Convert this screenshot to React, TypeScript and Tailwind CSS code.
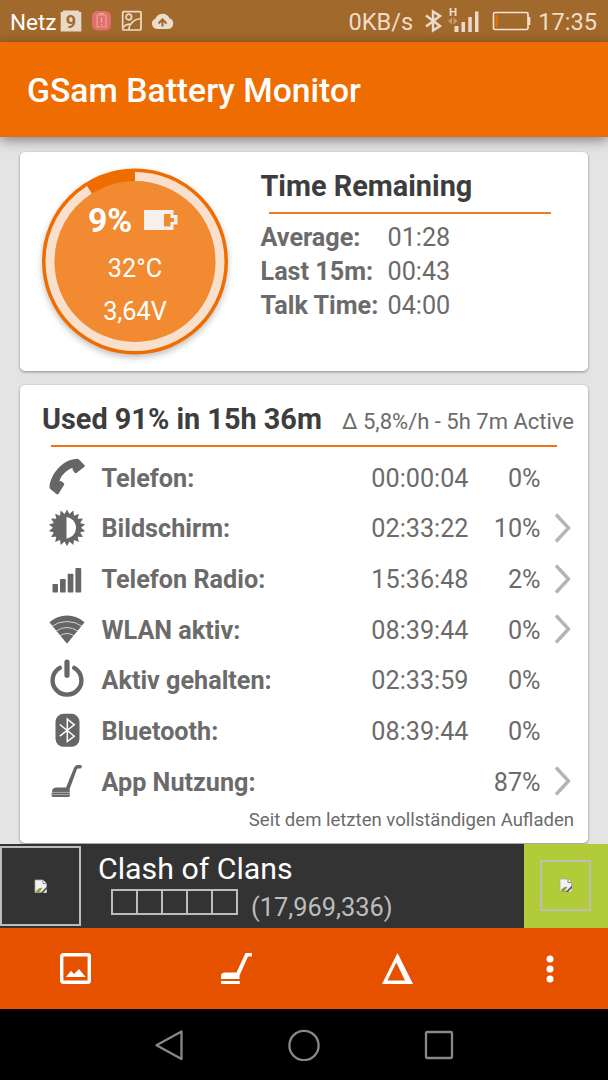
import type { ReactNode } from "react";

type UsageRow = {
    label: string;
    time?: string;
    percent: string;
    more?: boolean;
    icon: ReactNode;
};

const PhoneIcon = () => (
    <svg width="40" height="40" viewBox="0 1.200 40 40" fill="#666666">
        <path d="M2.500 29.800C2.800 24 6.500 15.500 13.200 9.400C18.500 4.600 24 2.300 29.800 1.900C30.800 1.900 31.400 2.100 32 2.700L37.300 8.200C38 8.900 37.900 9.500 37.200 10.200L29.400 16.100C28.700 16.600 28.200 16.400 27.700 15.900L25.800 13.300C25.200 12.500 25.600 11.900 26 11.200C22 11.200 13.300 18.500 12.400 24.700C13.100 24.100 13.700 24 14.400 24.500L16.800 26.500C17.400 27 17.400 27.600 17 28.200L11.600 36.900C11 37.800 10.200 37.900 9.400 37.300L3.600 32.500C2.800 31.800 2.500 31 2.500 29.800Z" />
    </svg>
);

const teeth = Array.from({ length: 36 }, (_, i) => {
    const r = i % 2 === 0 ? 18.4 : 14;
    const a = (i * Math.PI) / 18;
    return `${20 + r * Math.sin(a)},${20 - r * Math.cos(a)}`;
}).join(" ");

const BrightnessIcon = () => (
    <svg width="40" height="40" viewBox="0 1.200 40 40">
        <polygon points={teeth} fill="#666666" />
        <path d="M19.500 9.100A11 11 0 0 1 19.500 30.900Z" fill="#fff" />
    </svg>
);

const SignalIcon = () => (
    <svg width="40" height="40" viewBox="0 -0.500 40 40" fill="#666666">
        <rect x="5.500" y="23.500" width="5.500" height="8.500" rx="0.800" />
        <rect x="13" y="18.500" width="5.700" height="13.500" rx="0.800" />
        <rect x="20.700" y="13.200" width="5.700" height="18.800" rx="0.800" />
        <rect x="28.400" y="7.500" width="5.800" height="24.500" rx="0.800" />
    </svg>
);

const WifiIcon = () => (
    <svg width="40" height="40" viewBox="0 0 40 40">
        <path d="M2.400 12.300Q10 5.500 20 5.500T37.600 12.300L20.800 32.800Q20 33.800 19.200 32.800Z" fill="#666666" />
        <g fill="none" stroke="#d2d2d2" strokeWidth="1">
            <path d="M5 16.300Q11.500 11.500 20 11.500T35 16.300" />
            <path d="M9 21.300Q14 17.500 20 17.500T31 21.300" />
            <path d="M12.500 26Q16 23.500 20 23.500T27.500 26" />
        </g>
    </svg>
);

const PowerIcon = () => (
    <svg className="overflow-visible" width="40" height="40" viewBox="0 2.800 40 40" fill="none" stroke="#666666" strokeLinecap="round">
        <path d="M12.800 9.600A14.400 14.400 0 1 0 27.200 9.600" strokeWidth="4.400" />
        <path d="M20 4V17" strokeWidth="5.200" />
    </svg>
);

const BluetoothIcon = () => (
    <svg width="40" height="40" viewBox="0 2.200 40 40">
        <rect x="8.500" y="4" width="24" height="33" rx="8" fill="#666666" />
        <path d="M12.800 14.700L27.300 26.400L20.300 31.700V9.200L27.300 15L12.800 26.400" fill="none" stroke="#fff" strokeWidth="1.500" />
    </svg>
);

const VacuumIcon = () => (
    <svg width="40" height="40" viewBox="0 2 40 40" fill="#666666">
        <path d="M19 27.500L27 8Q28.200 5 31 5H33.500Q34.800 5 34.800 6.500T33.500 8.500H31Q30.200 8.500 29.700 9.800L22.500 29.500Z" />
        <path d="M5 32Q5 27.500 9.500 27.500H21Q23 27.500 22.800 32Z" />
        <rect x="4.600" y="32" width="18.200" height="5" rx="1.500" />
        <path d="M5 32.400H22.500M5 34.600H22.500" stroke="#bbb" strokeWidth="0.800" />
    </svg>
);

const BrokenImage = () => (
    <svg width="14" height="15" viewBox="0 0 14 15">
        <path d="M1 1H9L12.500 4.500V13.500H1Z" fill="#f2f2f2" stroke="#aaa" strokeWidth="0.800" />
        <path d="M9 1L9 4.500H12.500" fill="#fff" stroke="#777" strokeWidth="0.900" />
        <path d="M1.500 13.500Q3 8.500 8.500 8.700L5.500 13.500Z" fill="#8ca43a" />
        <path d="M6.500 14L12.800 7.500V10L9 14Z" fill="#555" />
        <path d="M9.500 13.700L12.500 10.500V13.700Z" fill="#ddd" />
    </svg>
);

const rows: UsageRow[] = [
    { label: "Telefon:", time: "00:00:04", percent: "0%", icon: <PhoneIcon /> },
    { label: "Bildschirm:", time: "02:33:22", percent: "10%", more: true, icon: <BrightnessIcon /> },
    { label: "Telefon Radio:", time: "15:36:48", percent: "2%", more: true, icon: <SignalIcon /> },
    { label: "WLAN aktiv:", time: "08:39:44", percent: "0%", more: true, icon: <WifiIcon /> },
    { label: "Aktiv gehalten:", time: "02:33:59", percent: "0%", icon: <PowerIcon /> },
    { label: "Bluetooth:", time: "08:39:44", percent: "0%", icon: <BluetoothIcon /> },
    { label: "App Nutzung:", percent: "87%", more: true, icon: <VacuumIcon /> },
];

const remaining = [
    { label: "Average:", value: "01:28" },
    { label: "Last 15m:", value: "00:43" },
    { label: "Talk Time:", value: "04:00" },
];

const StatusBar = () => (
    <div className="flex h-[42px] items-center justify-between bg-[#a1692c] pl-[10px] pr-[11px] text-[23.600px] text-[#f0dcc8]">
        <div className="flex items-center">
            <span className="w-[50px] pt-[3px] text-[22.500px] text-white">Netz</span>
            <svg width="22" height="24" viewBox="0 0 22 24">
                <path d="M3 1.500H19V3H21.300V22.500H0.700V3H3Z" fill="#e9d8c6" />
                <text x="11" y="18.500" textAnchor="middle" fontSize="18" fontWeight="700" fill="#a1692c">9</text>
            </svg>
            <svg className="ml-[9px]" width="21" height="22" viewBox="0 0 21 22" fill="none">
                <rect x="1" y="1" width="19" height="19.500" rx="5.500" fill="#e0706c" />
                <path d="M8.500 5V3.700H12.500V5M6 5H15V17H6Z" stroke="#eda48f" strokeWidth="1.200" />
                <path d="M10.500 7.500V12.500M10.500 14V15.200" stroke="#f0b49f" strokeWidth="1.300" />
            </svg>
            <svg className="ml-[9px]" width="22" height="22" viewBox="0 0 22 22" fill="none" stroke="#ecdccb" strokeWidth="1.700">
                <rect x="1.700" y="1.700" width="18.300" height="18.300" rx="1" />
                <circle cx="7.800" cy="7" r="2.800" />
                <path d="M2 17.500Q5.500 13.500 9 14.300M7.500 20Q9 9.500 20 8.500" />
            </svg>
            <svg className="ml-[8px]" width="23" height="18" viewBox="0 0 23 18">
                <path d="M6 17A5.300 5.300 0 0 1 4.300 6.800A7.600 7.600 0 0 1 18.500 6.300A5.500 5.500 0 0 1 17 17Z" fill="#ecdccb" />
                <path d="M11.500 14.500V8.500M7.500 11.500L11.500 7.500L15.500 11.500" fill="none" stroke="#a1692c" strokeWidth="2" />
            </svg>
        </div>
        <div className="flex items-center">
            <span className="pt-[3px]">0KB/s</span>
            <svg className="ml-[12px]" width="17" height="24" viewBox="0 0 17 24" fill="none" stroke="#ecdccb" strokeWidth="2.400">
                <path d="M1 6.500L15 17L8 21.500V2.500L15 7L1 17.500" />
            </svg>
            <svg className="mb-[2px] ml-[6px]" width="32" height="28" viewBox="0 0 32 28" fill="#ecdccb">
                <text x="1" y="10" fontSize="11.500" fontWeight="700">H</text>
                <path d="M0 15L4 11.500V18.500ZM9.500 15L5.500 11.500V18.500Z" fill="#c39c72" />
                <rect x="6.500" y="20" width="4" height="6" />
                <rect x="13.500" y="16" width="3.500" height="10" />
                <rect x="20.300" y="11" width="3.500" height="15" />
                <rect x="27" y="5.500" width="3.500" height="20.500" />
            </svg>
            <svg className="ml-[12px]" width="39" height="20" viewBox="0 0 39 20" fill="none" stroke="#f5e6d6" strokeWidth="1.600">
                <rect x="1.500" y="1.500" width="34.500" height="17" rx="1.500" />
                <path d="M37.300 6V14" strokeWidth="2" />
                <path d="M4.700 4V16" stroke="#ef6c00" strokeWidth="2.300" />
            </svg>
            <span className="ml-[7px] pt-[3px]">17:35</span>
        </div>
    </div>
);

const BatteryDial = () => (
    <div className="relative h-[200px] w-[200px]">
        <svg className="absolute inset-0 drop-shadow-[0_3px_3px_rgba(0,0,0,0.25)]" width="200" height="200" viewBox="0 0.500 200 200">
            <circle cx="100" cy="100" r="93" fill="#ef6c00" />
            <circle cx="100" cy="100" r="80.500" fill="#f28a32" />
            <circle
                cx="100"
                cy="100"
                r="85"
                fill="none"
                stroke="#f8e0cc"
                strokeWidth="9"
                pathLength="100"
                strokeDasharray="91 9"
                transform="rotate(-90 100 100)"
            />
        </svg>
        <div className="relative flex flex-col items-center pt-[36px] text-white">
            <div className="mr-[4px] flex h-[44px] items-center gap-[11px]">
                <span className="pt-[2px] text-[33.800px] font-bold tracking-[-0.300px]">9%</span>
                <svg width="35" height="22" viewBox="0 0 35 22">
                    <path d="M2 1H30.500V6H34.500V15.500H30.500V21H2Q1 21 1 20V2Q1 1 2 1Z" fill="#f6f0ec" />
                    <path d="M21 5H27.500V9H31V13H27.500V17.500H21Z" fill="#f28a32" />
                </svg>
            </div>
            <span className="mt-[5px] text-[25.300px] leading-[43px]">32°C</span>
            <span className="text-[25.300px] leading-[43px]">3,64V</span>
        </div>
    </div>
);

const App = () => {
    return (
        <div className="flex h-[1080px] w-[608px] flex-col overflow-hidden bg-[#e4e4e4] font-['Roboto',sans-serif] text-[#6b6b6b]">
            <StatusBar />
            <header className="z-10 flex h-[95px] items-center bg-[#ef6c00] pl-[27px] pt-[4px] shadow-[0_3px_12px_rgba(0,0,0,0.45)]">
                <h1 className="text-[33.700px] font-medium text-white">GSam Battery Monitor</h1>
            </header>

            <main className="flex h-[707px] flex-col gap-[14px] px-5 pt-[15px]">
                <section className="flex h-[219px] shrink-0 rounded-[5px] bg-white pl-[15px] pt-[10px] shadow-[0_1px_3px_rgba(0,0,0,0.4)]">
                    <BatteryDial />
                    <div className="ml-[25.500px] pt-[4px]">
                        <h2 className="text-[28.850px] font-bold leading-[40px] text-[#3d3d3d]">Time Remaining</h2>
                        <div className="mb-[6.600px] ml-[8px] mt-[6px] h-[2px] w-[282px] bg-[#ee7b1f]" />
                        {remaining.map((r) => (
                            <div key={r.label} className="flex h-[34.300px] items-center text-[25.200px]">
                                <span className="w-[127px] whitespace-nowrap font-bold">{r.label}</span>
                                <span>{r.value}</span>
                            </div>
                        ))}
                    </div>
                </section>

                <section className="h-[458px] shrink-0 rounded-[5px] bg-white pl-[22px] pr-[14px] pt-[14px] shadow-[0_1px_3px_rgba(0,0,0,0.4)]">
                    <div className="flex items-center justify-between whitespace-nowrap">
                        <h2 className="text-[28.850px] font-bold leading-[40px] text-[#3d3d3d]">Used 91% in 15h 36m</h2>
                        <span className="pt-[4px] text-[22px]">Δ 5,8%/h - 5h 7m Active</span>
                    </div>
                    <div className="ml-[9px] mt-[6px] h-[2px] w-[506px] bg-[#f3701a]" />
                    <div className="pt-[6px]">
                        {rows.map((row) => (
                            <div key={row.label} className="flex h-[50.670px] items-center text-[25.200px]">
                                <div className="ml-[5px] w-[54.500px]">{row.icon}</div>
                                <span className="w-[257px] pt-[0.500px] font-bold">{row.label}</span>
                                <span className="w-[110px] pt-[0.500px] text-right">{row.time}</span>
                                <span className="w-[72px] pt-[0.500px] text-right">{row.percent}</span>
                                {row.more && (
                                    <svg className="ml-[13px]" width="18" height="32" viewBox="0 0.500 18 32" fill="none" stroke="#b5b5b5" strokeWidth="3.400">
                                        <path d="M2 2L14.500 15.500L2 29" />
                                    </svg>
                                )}
                            </div>
                        ))}
                    </div>
                    <p className="text-right text-[18.550px] leading-[25px]">Seit dem letzten vollständigen Aufladen</p>
                </section>
            </main>

            <div className="z-10 flex h-[84px] bg-[#333333]">
                <div className="mt-[2px] flex h-[80px] w-[81px] items-center justify-center border-2 border-[#bdbdbd]">
                    <BrokenImage />
                </div>
                <div className="flex-1 pl-[17px] pt-[7px]">
                    <div className="text-[30.300px] leading-[36px] text-white">Clash of Clans</div>
                    <div className="flex items-start pl-[13px]">
                        <div className="mt-[2px] flex h-[26px] w-[127px] border border-[#bdbdbd]">
                            {[0, 1, 2, 3, 4].map((n) => (
                                <div key={n} className="flex-1 border border-[#bdbdbd]" />
                            ))}
                        </div>
                        <span className="ml-[13px] mt-[2px] text-[25.400px] leading-[36px] text-[#bdbdbd]">(17,969,336)</span>
                    </div>
                </div>
                <div className="flex w-[84px] items-center justify-center bg-[#b2cb39] pb-px pr-px">
                    <div className="flex h-[51px] w-[51px] items-center justify-center border-2 border-[#bdbdbd]">
                        <BrokenImage />
                    </div>
                </div>
            </div>

            <div className="flex h-[81px] items-center bg-[#e65100] pl-[59px]">
                <svg width="33" height="33" viewBox="0 0 33 33">
                    <rect x="2.700" y="2.700" width="27.600" height="27.600" rx="1.500" fill="none" stroke="#fff" strokeWidth="3.400" />
                    <path d="M7 25L12 18.800L15 22L20 17L26.500 25Z" fill="#fff" />
                </svg>
                <svg className="ml-[128px]" width="33" height="33" viewBox="0 0 33 33" fill="#fff">
                    <path d="M25.500 1H32V4.500H28L19.500 23.500V27H1V24Q1 20.500 5 20.500H16.500Z" />
                    <rect x="1" y="29" width="18.800" height="3" />
                </svg>
                <svg className="ml-[128px]" width="33" height="33" viewBox="0 0 33 33">
                    <path fillRule="evenodd" d="M16.500 1L32 32H1ZM15.300 10.500L6.500 28.500H24Z" fill="#fff" />
                </svg>
                <svg className="ml-[130.500px]" width="10" height="30" viewBox="0 0 10 30" fill="#fff">
                    <circle cx="5" cy="5" r="3.500" />
                    <circle cx="5" cy="15" r="3.500" />
                    <circle cx="5" cy="25" r="3.500" />
                </svg>
            </div>

            <nav className="flex flex-1 items-center gap-[103px] bg-black pl-[153px]">
                <svg width="32" height="32" viewBox="0 0 32 32" fill="none" stroke="#888" strokeWidth="2.300" strokeLinejoin="round">
                    <path d="M28.500 2.500V30L3.500 16.250Z" />
                </svg>
                <svg width="32" height="32" viewBox="0 0 32 32" fill="none" stroke="#888" strokeWidth="2.300">
                    <circle cx="16" cy="16.500" r="14.600" />
                </svg>
                <svg width="32" height="32" viewBox="0 0 32 32" fill="none" stroke="#888" strokeWidth="2.300">
                    <rect x="3" y="3" width="26" height="26" rx="1" />
                </svg>
            </nav>
        </div>
    );
};
export default App;
